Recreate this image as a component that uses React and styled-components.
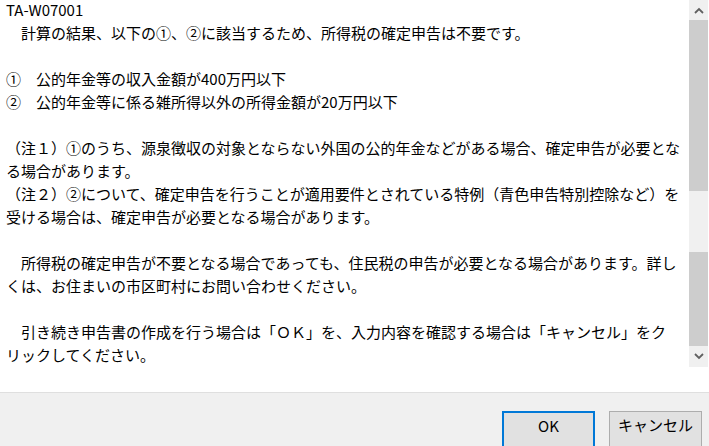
import React from 'react';
import styled, { createGlobalStyle } from 'styled-components';

const GlobalStyle = createGlobalStyle`
    html, body {
        margin: 0;
        padding: 0;
        overflow: hidden;
        background: #ffffff;
    }
`;

const Dialog = styled.div`
    width: 709px;
    height: 446px;
    display: flex;
    flex-direction: column;
    overflow: hidden;
    font-family: "Noto Sans CJK JP", "Noto Sans", sans-serif;
    color: #000;
`;

const Body = styled.div`
    height: 392px;
    flex-shrink: 0;
    display: flex;
    align-items: flex-start;
    background: #ffffff;
`;

const MessagePane = styled.div`
    flex: 1;
    padding: 0 0 0 6px;
    margin-top: -2px;
    font-size: 15px;
    line-height: 23px;
    white-space: nowrap;
`;

const Line = styled.div`
    height: 23px;
`;

const ScrollBar = styled.div`
    width: 19px;
    height: 367px;
    margin-right: 1px;
    display: flex;
    flex-direction: column;
    background: #f0f0f0;
`;

const ArrowButton = styled.div`
    height: ${props => props.$h}px;
    display: flex;
    align-items: center;
    justify-content: center;
    background: #f0f0f0;
`;

const Thumb = styled.div`
    height: ${props => props.$h}px;
    background: ${props => (props.$track ? '#f0f0f0' : '#cdcdcd')};
`;

const Footer = styled.div`
    flex-shrink: 0;
    height: 80px;
    background: #f0f0f0;
    border-top: 1px solid #dfdfdf;
    display: flex;
    justify-content: flex-end;
    align-items: flex-start;
    gap: 14px;
    padding: 18px 7px 0 0;
`;

const Button = styled.button`
    width: 93px;
    height: 40px;
    box-sizing: border-box;
    padding: 3px 0 0;
    background: #e1e1e1;
    border: ${props => (props.$primary ? '2px solid #0078d7' : '1px solid #adadad')};
    font-family: "Noto Sans CJK JP", "Noto Sans", sans-serif;
    font-size: 15px;
    line-height: 20px;
    color: #000;
    display: flex;
    align-items: flex-start;
    justify-content: center;
`;

function Chevron({ up }) {
    return (
        <svg width="10" height="7" viewBox="0 0 10 7">
            <path
                d={up ? 'M1 6 L5 2 L9 6' : 'M1 1 L5 5 L9 1'}
                fill="none"
                stroke="#606060"
                strokeWidth="1.8"
            />
        </svg>
    );
}

const lines = [
    'TA-W07001',
    '　計算の結果、以下の①、②に該当するため、所得税の確定申告は不要です。',
    '',
    '①　公的年金等の収入金額が400万円以下',
    '②　公的年金等に係る雑所得以外の所得金額が20万円以下',
    '',
    '（注１）①のうち、源泉徴収の対象とならない外国の公的年金などがある場合、確定申告が必要とな',
    'る場合があります。',
    '（注２）②について、確定申告を行うことが適用要件とされている特例（青色申告特別控除など）を',
    '受ける場合は、確定申告が必要となる場合があります。',
    '',
    '　所得税の確定申告が不要となる場合であっても、住民税の申告が必要となる場合があります。詳し',
    'くは、お住まいの市区町村にお問い合わせください。',
    '',
    '　引き続き申告書の作成を行う場合は「ＯＫ」を、入力内容を確認する場合は「キャンセル」をク',
    'リックしてください。',
];

export default function App() {
    return (
        <>
            <GlobalStyle />
            <Dialog>
                <Body>
                    <MessagePane>
                        {lines.map((text, i) => (
                            <Line key={i}>{text}</Line>
                        ))}
                    </MessagePane>
                    <ScrollBar>
                        <ArrowButton $h={20}><Chevron up /></ArrowButton>
                        <Thumb $h={171} />
                        <Thumb $h={61} $track />
                        <Thumb $h={94} />
                        <ArrowButton $h={21}><Chevron /></ArrowButton>
                    </ScrollBar>
                </Body>
                <Footer>
                    <Button $primary>OK</Button>
                    <Button>キャンセル</Button>
                </Footer>
            </Dialog>
        </>
    );
}
